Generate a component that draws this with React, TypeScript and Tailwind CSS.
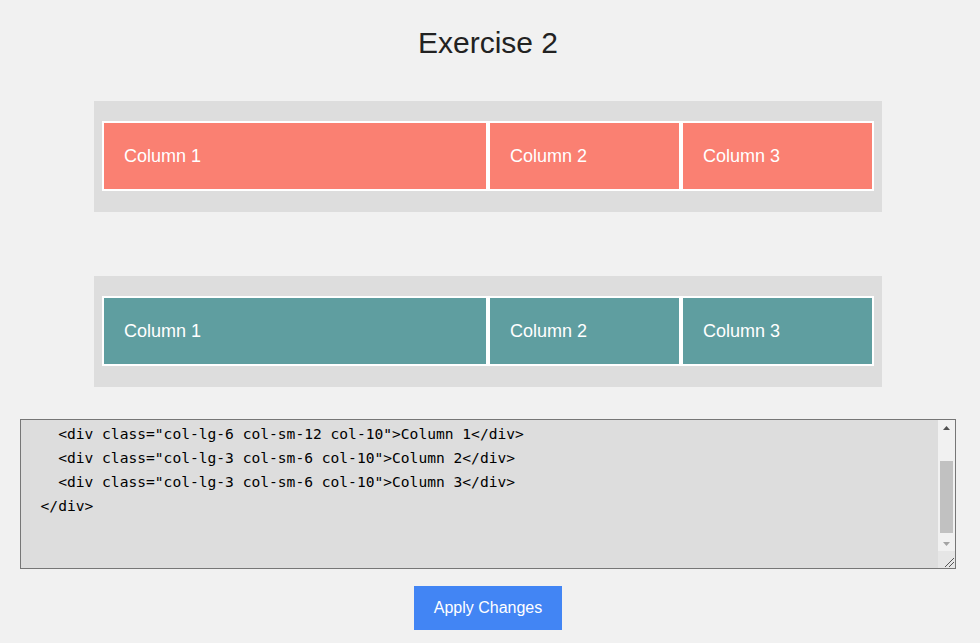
import { useEffect, useRef } from "react";

const code = `<!-- Exercise 2 -->
  <div class="row">
    <div class="col-lg-6 col-sm-12 col-10">Column 1</div>
    <div class="col-lg-3 col-sm-6 col-10">Column 2</div>
    <div class="col-lg-3 col-sm-6 col-10">Column 3</div>
  </div>

`;

function Row({ color }: { color: string }) {
  return (
    <div className="mx-auto w-[788px] bg-[#dddddd] px-2 pt-5 pb-[21px]">
      <div className="flex">
        <div className={`w-1/2 border-2 border-white px-5 py-5 text-[18px] leading-[26px] text-white ${color}`}>Column 1</div>
        <div className={`w-1/4 border-2 border-white px-5 py-5 text-[18px] leading-[26px] text-white ${color}`}>Column 2</div>
        <div className={`w-1/4 border-2 border-white px-5 py-5 text-[18px] leading-[26px] text-white ${color}`}>Column 3</div>
      </div>
    </div>
  );
}

export default function App() {
  const ref = useRef<HTMLTextAreaElement>(null);

  useEffect(() => {
    if (ref.current) ref.current.scrollTop = 48;
  }, []);

  return (
    <div className="min-h-screen bg-[#f1f1f1] font-['Liberation_Sans',Arial,sans-serif]">
      <div className="w-[976px] pt-[26px] pb-4">
        <h1 className="text-center text-[30px] leading-[34px] text-[#222222]">Exercise 2</h1>

        <div className="mt-[41px]">
          <Row color="bg-[#fa8072]" />
        </div>
        <div className="mt-16">
          <Row color="bg-[#5f9ea0]" />
        </div>

        <div className="relative mx-5 mt-8 w-[936px]">
          <textarea
            ref={ref}
            defaultValue={code}
            spellCheck={false}
            className="block h-[150px] w-full resize-none border border-[#767676] bg-[#dddddd] p-[2px] pr-5 font-['DejaVu_Sans_Mono',monospace] text-[14.6px] leading-[24px] text-black [scrollbar-width:none]"
          />
          {/* scrollbar drawn over the textarea */}
          <div className="pointer-events-none absolute top-px right-px bottom-px flex w-[17px] flex-col">
            <div className="flex flex-1 flex-col bg-[#f1f1f1]">
              <div className="flex h-[15px] items-center justify-center">
                <svg width="7" height="4" viewBox="0 0 7 4">
                  <path d="M3.5 0 L7 4 L0 4 Z" fill="#505050" />
                </svg>
              </div>
              <div className="flex-1 px-[2px] pt-[26px] pb-[3px]">
                <div className="h-full bg-[#c1c1c1]" />
              </div>
              <div className="flex h-[15px] items-center justify-center">
                <svg width="7" height="4" viewBox="0 0 7 4">
                  <path d="M0 0 L7 0 L3.5 4 Z" fill="#a3a3a3" />
                </svg>
              </div>
            </div>
            <div className="flex h-[17px] items-end justify-end bg-[#e6e6e6]">
              <svg width="12" height="12" viewBox="0 0 12 12">
                <path d="M11 2 L2 11 M11 6 L6 11" stroke="#555555" strokeWidth="1" />
              </svg>
            </div>
          </div>
        </div>

        <div className="mt-[17px] flex justify-center">
          <button className="bg-[#4285f4] px-5 py-3 text-[16px] leading-[20px] text-white">Apply Changes</button>
        </div>
      </div>
    </div>
  );
}
